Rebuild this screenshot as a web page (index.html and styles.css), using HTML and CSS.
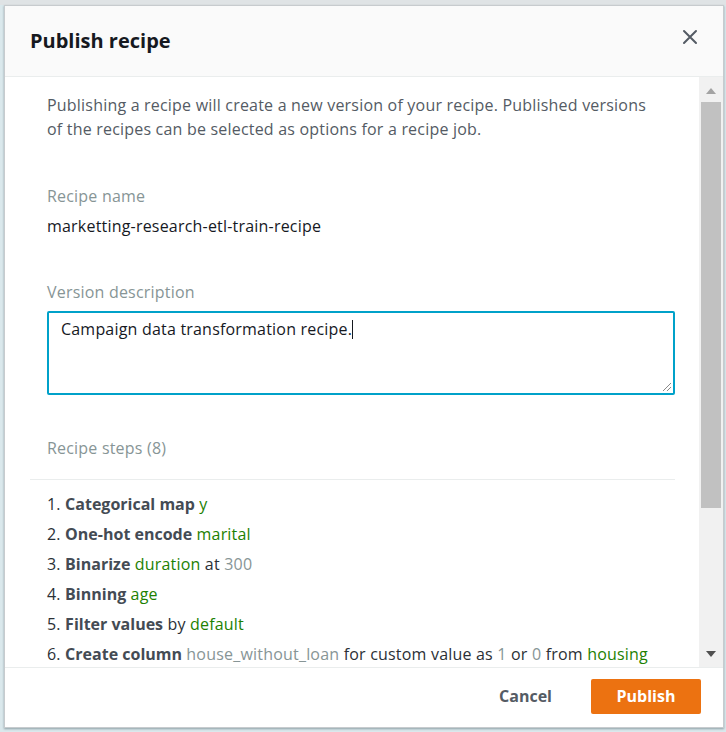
FILE: index.html
```html
<!DOCTYPE html>
<html lang="en">
<head>
<meta charset="utf-8">
<title>Publish recipe</title>
<link rel="stylesheet" href="styles.css">
</head>
<body>
<div class="page">
  <div class="modal" role="dialog" aria-labelledby="modal-title">
    <div class="modal-header">
      <h2 class="modal-title" id="modal-title">Publish recipe</h2>
      <button class="close-btn" aria-label="Close">
        <svg width="16" height="16" viewBox="0 0 16 16"><path d="M2 2 L14 14 M14 2 L2 14" stroke="#545b64" stroke-width="2" stroke-linecap="round" fill="none"/></svg>
      </button>
    </div>
    <div class="modal-body">
      <div class="content">
        <p class="intro">Publishing a recipe will create a new version of your recipe. Published versions of the recipes can be selected as options for a recipe job.</p>
        <div class="field field-name">
          <div class="label">Recipe name</div>
          <div class="value">marketting-research-etl-train-recipe</div>
        </div>
        <div class="field field-desc">
          <div class="label">Version description</div>
          <div class="textarea">Campaign data transformation recipe.<span class="caret"></span>
            <svg class="grip" width="12" height="12" viewBox="0 0 12 12"><path d="M11 3 L3 11 M11 7 L7 11" stroke="#8a8a8a" stroke-width="1" fill="none"/></svg>
          </div>
        </div>
        <div class="steps-head">Recipe steps (8)</div>
        <ol class="steps">
          <li>1. <b>Categorical map</b> <span class="g">y</span></li>
          <li>2. <b>One-hot encode</b> <span class="g">marital</span></li>
          <li>3. <b>Binarize</b> <span class="g">duration</span> at <span class="m">300</span></li>
          <li>4. <b>Binning</b> <span class="g">age</span></li>
          <li>5. <b>Filter values</b> by <span class="g">default</span></li>
          <li>6. <b>Create column</b> <span class="m">house_without_loan</span> for custom value as <span class="m">1</span> or <span class="m">0</span> from <span class="g">housing</span></li>
        </ol>
      </div>
      <div class="scrollbar" aria-hidden="true">
        <div class="sb-btn"><span class="tri-up"></span></div>
        <div class="sb-track"><div class="sb-thumb"></div></div>
        <div class="sb-btn"><span class="tri-down"></span></div>
      </div>
    </div>
    <div class="modal-footer">
      <button class="btn-link">Cancel</button>
      <button class="btn-primary">Publish</button>
    </div>
  </div>
</div>
</body>
</html>
```

FILE: styles.css
```css
* { box-sizing: border-box; }
html, body { margin: 0; padding: 0; }
body {
  background: #dfe3e5;
  font-family: "Open Sans", "Liberation Sans", Arial, sans-serif;
  font-size: 16px;
  letter-spacing: 0.2px;
  color: #16191f;
}
.page {
  height: 732px;
  padding: 5px 2px 0 4px;
  background: linear-gradient(#dfe3e5, #dfe3e5) top/100% 5px no-repeat, #dae8ec;
}
.modal {
  width: 720px;
  height: 723px;
  display: flex;
  flex-direction: column;
  background: #fff;
  border: 1px solid #c7cbce;
  box-shadow: 0 1px 2px rgba(0,28,36,0.35);
}
.modal-header {
  height: 71px;
  flex: none;
  display: flex;
  align-items: center;
  justify-content: space-between;
  padding: 0 25px 0 25px;
  background: #fafafa;
  border-bottom: 1px solid #eaeded;
}
.modal-title {
  margin: 0;
  font-size: 20px;
  font-weight: 700;
  letter-spacing: 0;
  color: #16191f;
  margin-top: -1px;
}
.close-btn {
  border: 0;
  background: none;
  padding: 0;
  width: 16px;
  height: 16px;
  margin-top: -9px;
  display: flex;
}
.modal-body {
  flex: 1;
  display: flex;
  min-height: 0;
}
.content {
  flex: 1;
  overflow: hidden;
  padding: 16px 24px 0 25px;
}
.intro {
  margin: 0 0 0 17px;
  max-width: 605px;
  line-height: 24px;
  color: #545b64;
}
.field { margin-left: 17px; }
.field-name { margin-top: 43px; }
.field-desc { margin-top: 42px; }
.label {
  line-height: 24px;
  color: #879596;
}
.value {
  margin-top: 6px;
  line-height: 24px;
  color: #16191f;
}
.textarea {
  position: relative;
  margin-top: 7px;
  height: 84px;
  border: 2px solid #00a1c9;
  border-radius: 2px;
  padding: 4px 12px;
  line-height: 24px;
  color: #16191f;
}
.caret {
  display: inline-block;
  width: 1px;
  height: 19px;
  background: #16191f;
  vertical-align: -4px;
}
.grip {
  position: absolute;
  right: 1px;
  bottom: 1px;
}
.steps-head {
  margin: 41px 0 0 17px;
  line-height: 24px;
  color: #879596;
}
.steps {
  list-style: none;
  margin: 19px 0 0 0;
  padding: 9px 0 0 17px;
  border-top: 1px solid #eaeded;
}
.steps li {
  line-height: 30px;
  color: #2b3036;
  white-space: nowrap;
}
.steps b { color: #444b54; font-weight: 700; letter-spacing: 0; }
.g { color: #1d8102; }
.m { color: #879596; }
.scrollbar {
  width: 24px;
  flex: none;
  display: flex;
  flex-direction: column;
  background: #f1f1f1;
}
.sb-btn {
  height: 23px;
  display: flex;
  align-items: center;
  justify-content: center;
}
.sb-btn:first-child { padding-top: 4px; }
.sb-track {
  flex: 1;
  padding: 2px 2px 0 2px;
}
.sb-thumb {
  height: 406px;
  background: #c1c1c1;
}
.tri-up {
  width: 0; height: 0;
  border-left: 5px solid transparent;
  border-right: 5px solid transparent;
  border-bottom: 6px solid #a3a3a3;
}
.tri-down {
  width: 0; height: 0;
  border-left: 5px solid transparent;
  border-right: 5px solid transparent;
  border-top: 6px solid #505050;
  margin-top: -4px;
}
.modal-footer {
  height: 60px;
  flex: none;
  display: flex;
  align-items: center;
  justify-content: flex-end;
  gap: 19px;
  padding: 0 22px 3px 0;
  border-top: 1px solid #eaeded;
}
.btn-link {
  border: 0;
  background: none;
  font-family: inherit;
  font-size: 16px;
  font-weight: 700;
  letter-spacing: 0;
  color: #545b64;
  padding: 4px 20px;
}
.btn-primary {
  width: 110px;
  height: 35px;
  border: 0;
  border-radius: 2px;
  background: #ec7211;
  color: #fff;
  font-family: inherit;
  font-size: 16px;
  font-weight: 700;
  letter-spacing: 0;
}
```
